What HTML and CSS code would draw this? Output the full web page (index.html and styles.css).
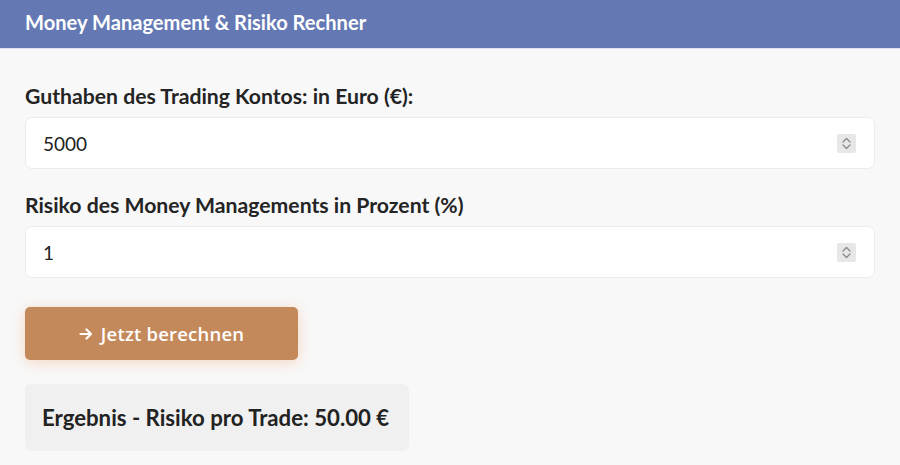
FILE: index.html
```html
<!DOCTYPE html>
<html lang="de">
<head>
<meta charset="utf-8">
<link rel="stylesheet" href="styles.css">
</head>
<body>
<header class="bar">Money Management &amp; Risiko Rechner</header>
<main class="content">
  <label class="label">Guthaben des Trading Kontos: in Euro (€):</label>
  <div class="field">
    <input class="field-input" type="text" value="5000">
    <span class="spin"><svg width="11" height="15" viewBox="0 0 11 15"><path d="M2 6 L5.5 2.5 L9 6 M2 9 L5.5 12.5 L9 9" fill="none" stroke="#8a8a8a" stroke-width="1.3" stroke-linecap="round" stroke-linejoin="round"/></svg></span>
  </div>
  <label class="label">Risiko des Money Managements in Prozent (%)</label>
  <div class="field">
    <input class="field-input" type="text" value="1">
    <span class="spin"><svg width="11" height="15" viewBox="0 0 11 15"><path d="M2 6 L5.5 2.5 L9 6 M2 9 L5.5 12.5 L9 9" fill="none" stroke="#8a8a8a" stroke-width="1.3" stroke-linecap="round" stroke-linejoin="round"/></svg></span>
  </div>
  <button class="btn"><svg class="arrow" width="14" height="12" viewBox="0 0 14 12"><path d="M1.5 6 H12 M7.5 1.5 L12 6 L7.5 10.5" fill="none" stroke="#fff" stroke-width="2.2" stroke-linecap="round" stroke-linejoin="round"/></svg><span>Jetzt berechnen</span></button>
  <div class="result">Ergebnis - Risiko pro Trade: 50.00 €</div>
</main>
</body>
</html>
```
FILE: styles.css
```css
html, body { margin: 0; padding: 0; }
body {
  background: #f8f8f8;
  font-family: Lato, "Liberation Sans", sans-serif;
  color: #242424;
}
.bar {
  height: 49px;
  background: #6479b4;
  color: #fff;
  font-size: 20.1px;
  font-weight: 700;
  display: flex;
  align-items: center;
  padding: 0 25px;
  padding-bottom: 5px;
  box-sizing: border-box;
  border-bottom: 1px solid #dfe3ee;
}
.content {
  padding: 0 25px;
  display: flex;
  flex-direction: column;
  align-items: flex-start;
}
.label {
  font-size: 21.2px;
  font-weight: 700;
  margin-top: 35px;
  line-height: 25px;
}
.label + .field { margin-top: 8px; }
.field + .label { margin-top: 24px; }
.field {
  align-self: stretch;
  height: 52px;
  box-sizing: border-box;
  background: #fff;
  border: 1px solid #ececec;
  border-radius: 7px;
  display: flex;
  align-items: center;
  padding: 0 18px 0 17px;
}
.field-input {
  flex: 1;
  border: none;
  outline: none;
  background: transparent;
  font-family: Lato, "Liberation Sans", sans-serif;
  font-size: 19px;
  color: #222;
  padding: 0;
}
.spin {
  width: 19px;
  height: 19px;
  background: #e7e7e7;
  border-radius: 2px;
  display: flex;
  align-items: center;
  justify-content: center;
}
.btn {
  margin-top: 29px;
  width: 273px;
  height: 53px;
  border: none;
  border-radius: 5px;
  background: #c4895b;
  color: #fff;
  font-family: "Open Sans", Lato, sans-serif;
  font-size: 18.5px;
  font-weight: 600;
  letter-spacing: 0.2px;
  box-shadow: 0 2px 14px rgba(240, 150, 90, 0.35);
  padding: 0;
  display: flex;
  align-items: center;
  justify-content: center;
  gap: 8px;
}
.arrow { margin-top: 1px; }
.result {
  margin-top: 24px;
  background: #f0f0f0;
  border-radius: 6px;
  padding: 0 20px 0 17px;
  height: 67px;
  display: flex;
  align-items: center;
  font-size: 22.2px;
  font-weight: 700;
  color: #222;
}
```
